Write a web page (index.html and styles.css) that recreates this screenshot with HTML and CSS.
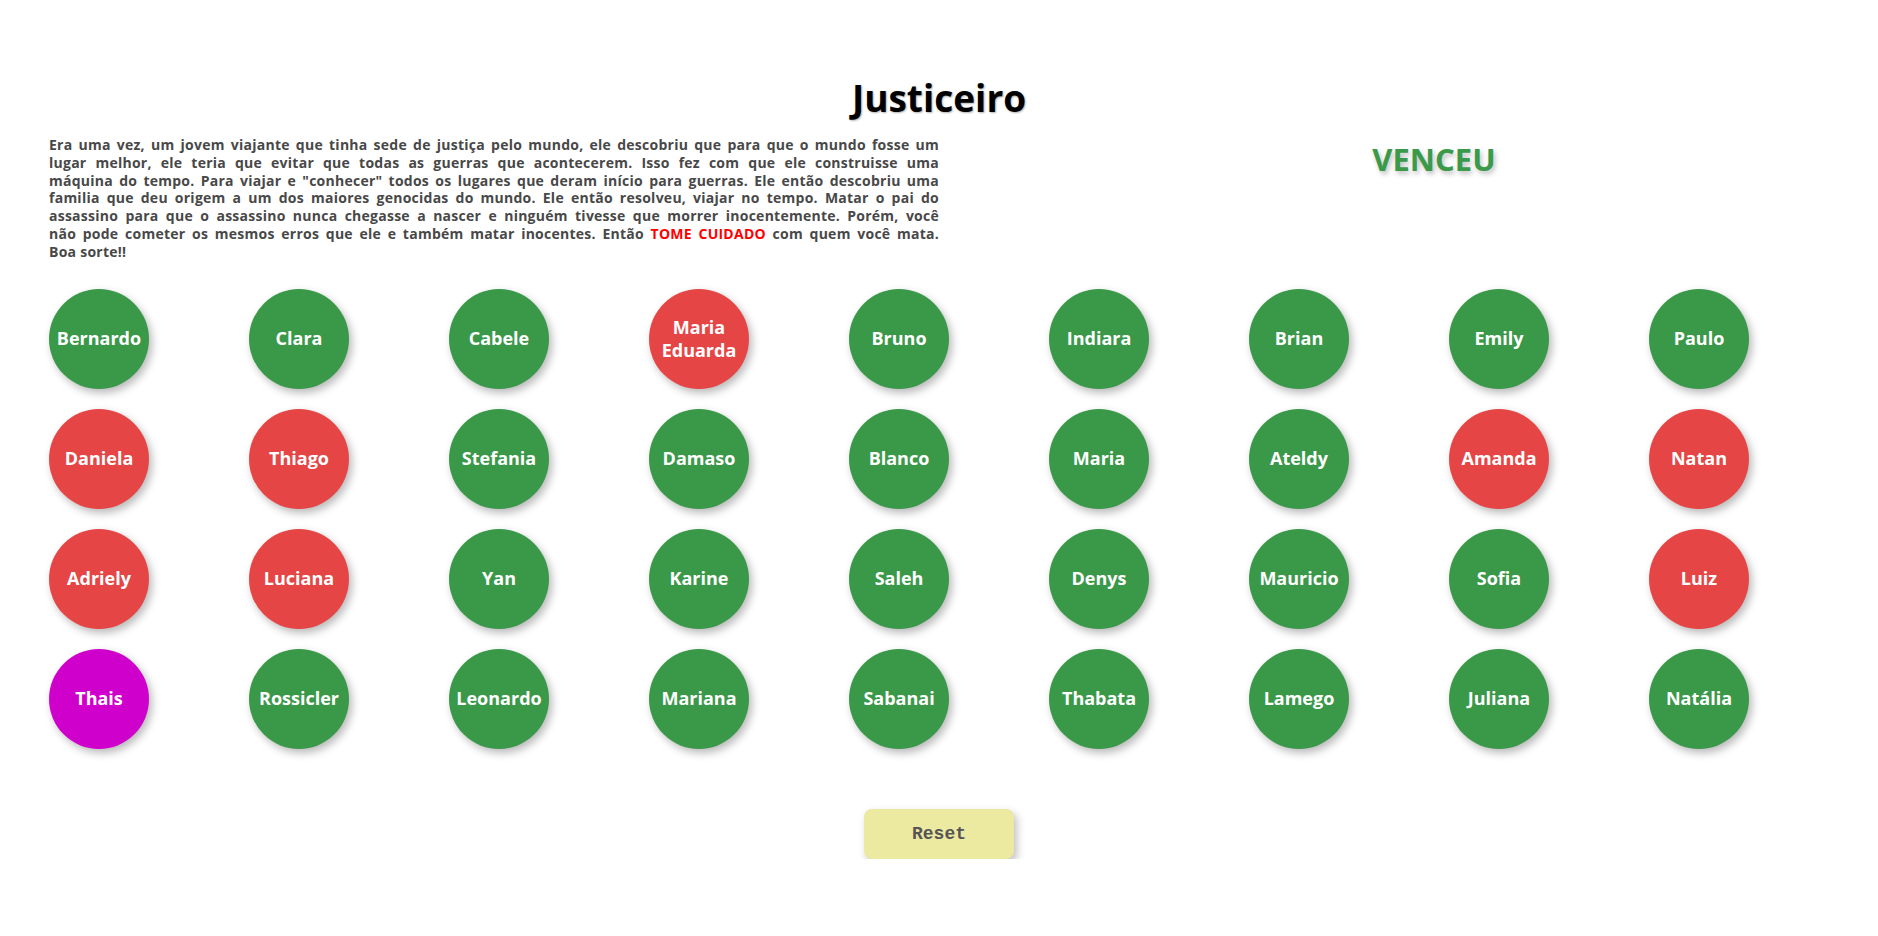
FILE: index.html
```html
<!DOCTYPE html>
<html lang="pt-BR">
<head>
<meta charset="utf-8">
<title>Justiceiro</title>
<link rel="stylesheet" href="styles.css">
</head>
<body>
<main class="page">
  <h1 class="title">Justiceiro</h1>
  <section class="intro">
    <p class="story">
      <span class="line">Era uma vez, um jovem viajante que tinha sede de justiça pelo mundo, ele descobriu que para que o mundo fosse um</span>
      <span class="line">lugar melhor, ele teria que evitar que todas as guerras que acontecerem. Isso fez com que ele construisse uma</span>
      <span class="line">máquina do tempo. Para viajar e "conhecer" todos os lugares que deram início para guerras. Ele então descobriu uma</span>
      <span class="line">familia que deu origem a um dos maiores genocidas do mundo. Ele então resolveu, viajar no tempo. Matar o pai do</span>
      <span class="line">assassino para que o assassino nunca chegasse a nascer e ninguém tivesse que morrer inocentemente. Porém, você</span>
      <span class="line">não pode cometer os mesmos erros que ele e também matar inocentes. Então <span class="warn">TOME CUIDADO</span> com quem você mata.</span>
      <span class="line last">Boa sorte!!</span>
    </p>
    <div class="result">VENCEU</div>
  </section>
  <section class="board">
    <div class="person ok">Bernardo</div>
    <div class="person ok">Clara</div>
    <div class="person ok">Cabele</div>
    <div class="person dead">Maria Eduarda</div>
    <div class="person ok">Bruno</div>
    <div class="person ok">Indiara</div>
    <div class="person ok">Brian</div>
    <div class="person ok">Emily</div>
    <div class="person ok">Paulo</div>

    <div class="person dead">Daniela</div>
    <div class="person dead">Thiago</div>
    <div class="person ok">Stefania</div>
    <div class="person ok">Damaso</div>
    <div class="person ok">Blanco</div>
    <div class="person ok">Maria</div>
    <div class="person ok">Ateldy</div>
    <div class="person dead">Amanda</div>
    <div class="person dead">Natan</div>

    <div class="person dead">Adriely</div>
    <div class="person dead">Luciana</div>
    <div class="person ok">Yan</div>
    <div class="person ok">Karine</div>
    <div class="person ok">Saleh</div>
    <div class="person ok">Denys</div>
    <div class="person ok">Mauricio</div>
    <div class="person ok">Sofia</div>
    <div class="person dead">Luiz</div>

    <div class="person target">Thais</div>
    <div class="person ok">Rossicler</div>
    <div class="person ok">Leonardo</div>
    <div class="person ok">Mariana</div>
    <div class="person ok">Sabanai</div>
    <div class="person ok">Thabata</div>
    <div class="person ok">Lamego</div>
    <div class="person ok">Juliana</div>
    <div class="person ok">Natália</div>
  </section>
  <div class="actions">
    <button class="reset" type="button">Reset</button>
  </div>
</main>
</body>
</html>
```
FILE: styles.css
```css
html, body {
  margin: 0;
  padding: 0;
  background: #ffffff;
}

body {
  font-family: "Open Sans", "Noto Sans", sans-serif;
}

.page {
  padding: 0 49px;
}

.title {
  margin: 73px 0 0;
  font-size: 37px;
  line-height: 50px;
  font-weight: 700;
  text-align: center;
  color: #000;
  text-shadow: 1px 1px 2px rgba(0, 0, 0, 0.3);
}

.intro {
  display: flex;
  align-items: flex-start;
  margin-top: 13px;
}

.story {
  width: 890px;
  flex: 0 0 890px;
  margin: 0;
  font-size: 14px;
  line-height: 17.8px;
  letter-spacing: 0.25px;
  font-weight: 700;
  color: #484848;
}

.line {
  display: block;
  white-space: nowrap;
  text-align: justify;
  text-align-last: justify;
}

.line.last {
  text-align: left;
  text-align-last: left;
}

.warn {
  color: #ff0000;
}

.result {
  flex: 1;
  padding-left: 100px;
  margin-top: 3px;
  text-align: center;
  font-size: 31px;
  line-height: 41px;
  font-weight: 700;
  color: #3a9a4a;
  text-shadow: 2px 3px 5px rgba(0, 0, 0, 0.25);
}

.board {
  display: grid;
  grid-template-columns: repeat(9, 100px);
  column-gap: 100px;
  row-gap: 20px;
  margin-top: 28px;
}

.person {
  width: 100px;
  height: 100px;
  border-radius: 50%;
  display: flex;
  align-items: center;
  justify-content: center;
  text-align: center;
  color: #ffffff;
  font-size: 18px;
  line-height: 23px;
  font-weight: 700;
  box-shadow: 3px 4px 8px rgba(0, 0, 0, 0.28);
}

.ok {
  background: #3a9849;
}

.dead {
  background: #e64545;
}

.target {
  background: #d000cc;
}

.actions {
  display: flex;
  justify-content: center;
  margin-top: 60px;
}

.reset {
  width: 150px;
  height: 50px;
  border: none;
  border-radius: 8px;
  background: #ece9a0;
  color: #555555;
  font-family: "Liberation Mono", "DejaVu Sans Mono", monospace;
  font-size: 18px;
  font-weight: 700;
  box-shadow: 3px 4px 8px rgba(0, 0, 0, 0.25);
  cursor: pointer;
}
```
